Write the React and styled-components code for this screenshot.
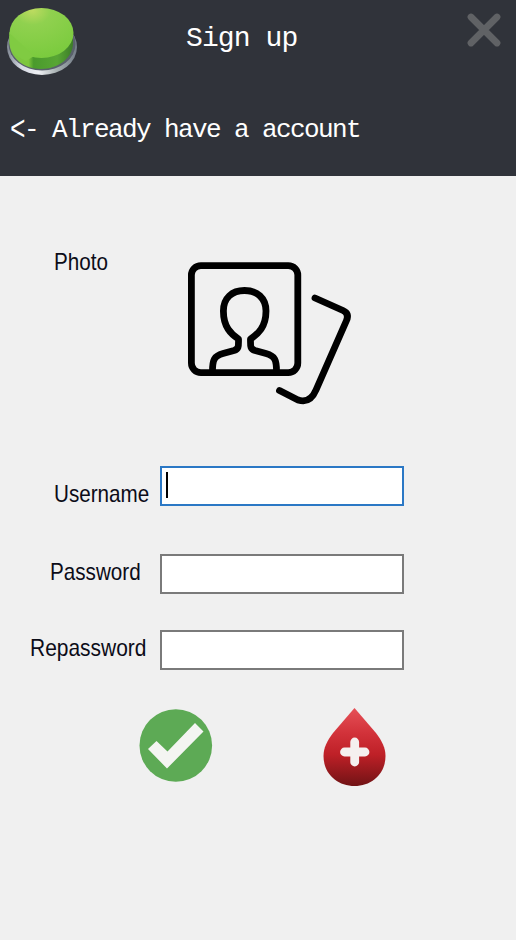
import React from "react";
import styled, { createGlobalStyle } from "styled-components";

const GlobalStyle = createGlobalStyle`
  *, *::before, *::after { box-sizing: border-box; }
  body { margin: 0; background: #f0f0f0; }
  svg { display: block; }
`;

const Window = styled.main`
  width: 516px;
  height: 940px;
  overflow: hidden;
  background: #f0f0f0;
`;

const Header = styled.header`
  height: 176px;
  background: #30333a;
  color: #fff;
  font-family: "Liberation Mono", monospace;
`;

const TitleBar = styled.div`
  display: grid;
  grid-template-columns: 80px 1fr 50px;
  height: 108px;
  padding-left: 4px;
`;

const Logo = styled.div`
  padding-top: 4px;
`;

const Title = styled.h1`
  margin: 0;
  padding: 21px 0 0 102px;
  font-size: 28px;
  line-height: 36px;
  font-weight: 400;
  letter-spacing: -0.9px;
  white-space: pre;
`;

const IconButton = styled.button`
  display: block;
  align-self: start;
  padding: 0;
  border: 0;
  background: transparent;
  margin-top: ${(p) => p.$top || 0}px;
`;

const BackLink = styled.a`
  display: block;
  padding: 6px 0 0 10px;
  font-size: 26px;
  line-height: 32px;
  letter-spacing: -1.6px;
  white-space: pre;
`;

const Arrow = styled.span`
  display: inline-block;
  transform: scaleY(1.35);
  transform-origin: 50% 46%;
`;

const Form = styled.form`
  display: flex;
  flex-direction: column;
  padding-top: 70px;
`;

const LabelCell = styled.div`
  width: 160px;
  flex: none;
  padding: ${(p) => p.$top}px 0 0 ${(p) => p.$left}px;
`;

const Label = styled.label`
  display: inline-block;
  color: #0c0c18;
  font-family: "Liberation Sans", Arial, sans-serif;
  font-size: 24px;
  line-height: 28px;
  white-space: nowrap;
  transform: scaleX(${(p) => p.$stretch || 0.86});
  transform-origin: 0 50%;
`;

const PhotoRow = styled.div`
  display: flex;
  height: 220px;
`;

const PhotoPicker = styled.div`
  padding: 4px 0 0 20px;
`;

const Field = styled.div`
  display: flex;
  height: 40px;
  margin-bottom: ${(p) => p.$gap}px;
`;

const InputBox = styled.div`
  width: 244px;
  height: 40px;
  padding: 4px;
  border: 2px solid ${(p) => (p.$focused ? "#2b78c5" : "#7a7a7a")};
  background: #fff;
`;

const Caret = styled.div`
  width: 2px;
  height: 26px;
  background: #000;
`;

const Actions = styled.div`
  display: flex;
  gap: 106px;
  padding-left: 138px;
`;

function GreenButton() {
  return (
    <svg width="76" height="76" viewBox="4 4 76 76">
      <defs>
        <linearGradient id="rim" x1="0" x2="1">
          <stop offset="0" stopColor="#7f8792" />
          <stop offset=".2" stopColor="#d5d9e2" />
          <stop offset=".45" stopColor="#eef0f4" />
          <stop offset=".7" stopColor="#aab3b4" />
          <stop offset="1" stopColor="#727b86" />
        </linearGradient>
        <linearGradient id="side" x1="0" x2="1">
          <stop offset="0" stopColor="#7fc745" />
          <stop offset=".3" stopColor="#7dc63c" />
          <stop offset=".38" stopColor="#4a9a2c" />
          <stop offset=".75" stopColor="#58a634" />
          <stop offset="1" stopColor="#3c7c28" />
        </linearGradient>
        <radialGradient id="cap" cx=".36" cy=".05" r=".95">
          <stop offset="0" stopColor="#bddb60" />
          <stop offset=".3" stopColor="#90d14f" />
          <stop offset="1" stopColor="#7bcb3e" />
        </radialGradient>
      </defs>
      <ellipse cx="42" cy="47" rx="35" ry="28" fill="url(#rim)" />
      <ellipse cx="42" cy="44" rx="33.500" ry="26.500" fill="#59616b" />
      <path d="M9.500 32V43C10 58 24 69 41 69S73 58 73 43V32Z" fill="url(#side)" />
      <ellipse cx="41.500" cy="33" rx="32" ry="25" fill="url(#cap)" />
      <path d="M9.500 33V43C10 50 16 57 26 61L34 56Z" fill="#80cb42" />
    </svg>
  );
}

function CloseIcon() {
  return (
    <svg width="36" height="36" viewBox="466 12 36 36">
      <path d="M471 17L497 43M497 17L471 43" stroke="#606265" strokeWidth="6.8" strokeLinecap="round" />
    </svg>
  );
}

function PhotoIcon() {
  return (
    <svg width="180" height="165" viewBox="180 250 180 165" fill="none" stroke="#000" strokeWidth="6.8" strokeLinecap="round" strokeLinejoin="round">
      <rect x="191.4" y="265.6" width="106.400" height="107" rx="9.5" />
      <path d="M212.5 371C212.5 360 214 356 223 353.5L234 350.5C239 349 238.500 346 238.500 339C231 334 223.400 327 223.400 311C223.400 298 232 290.500 244.500 290.500S266 298 266 311C266 327 258 334 250.500 339C250.500 346 250 349 255 350.500L266 353.500C275 356 276.500 360 276.500 371" strokeLinecap="butt" />
      <path d="M315 298L343 310.500Q349.500 313.500 346.500 320.500L316 390Q310 404 298 400L279.500 390.500" />
    </svg>
  );
}

function ConfirmIcon() {
  return (
    <svg width="76" height="76" viewBox="138 708 76 76">
      <circle cx="175.800" cy="745.500" r="36.300" fill="#5daa55" />
      <path d="M148 749L156.500 741L167.500 751.500L195 723L203.500 731.500L167 768.500Z" fill="#f4f5f2" />
    </svg>
  );
}

function DropIcon() {
  return (
    <svg width="70" height="80" viewBox="320 708 70 80">
      <defs>
        <linearGradient id="drop" x1="0" y1="0" x2="0" y2="1">
          <stop offset="0" stopColor="#e65057" />
          <stop offset=".32" stopColor="#d2323a" />
          <stop offset=".6" stopColor="#be2027" />
          <stop offset="1" stopColor="#711315" />
        </linearGradient>
      </defs>
      <path d="M354.500 708L376 733C382 741 385.500 748 385.500 756C385.500 774 371.500 786 354.500 786S323.500 774 323.500 756C323.500 748 327 741 333 733Z" fill="url(#drop)" />
      <path d="M354.700 742V762M344.500 752H365" stroke="#f5f0ef" strokeWidth="8.800" strokeLinecap="round" />
    </svg>
  );
}

export default function App() {
  return (
    <Window>
      <GlobalStyle />
      <Header>
        <TitleBar>
          <Logo><GreenButton /></Logo>
          <Title>Sign up</Title>
          <IconButton type="button" aria-label="Close" $top={12}><CloseIcon /></IconButton>
        </TitleBar>
        <BackLink><Arrow>{"<"}</Arrow>{"- Already have a account"}</BackLink>
      </Header>
      <Form>
        <PhotoRow>
          <LabelCell $top={2} $left={54}><Label>Photo</Label></LabelCell>
          <PhotoPicker><PhotoIcon /></PhotoPicker>
        </PhotoRow>
        <Field $gap={48}>
          <LabelCell $top={14} $left={54}><Label>Username</Label></LabelCell>
          <InputBox $focused><Caret /></InputBox>
        </Field>
        <Field $gap={36}>
          <LabelCell $top={4} $left={50}><Label>Password</Label></LabelCell>
          <InputBox />
        </Field>
        <Field $gap={38}>
          <LabelCell $top={4} $left={30}><Label $stretch={0.873}>Repassword</Label></LabelCell>
          <InputBox />
        </Field>
        <Actions>
          <IconButton type="button" aria-label="Confirm"><ConfirmIcon /></IconButton>
          <IconButton type="button" aria-label="Clear"><DropIcon /></IconButton>
        </Actions>
      </Form>
    </Window>
  );
}
